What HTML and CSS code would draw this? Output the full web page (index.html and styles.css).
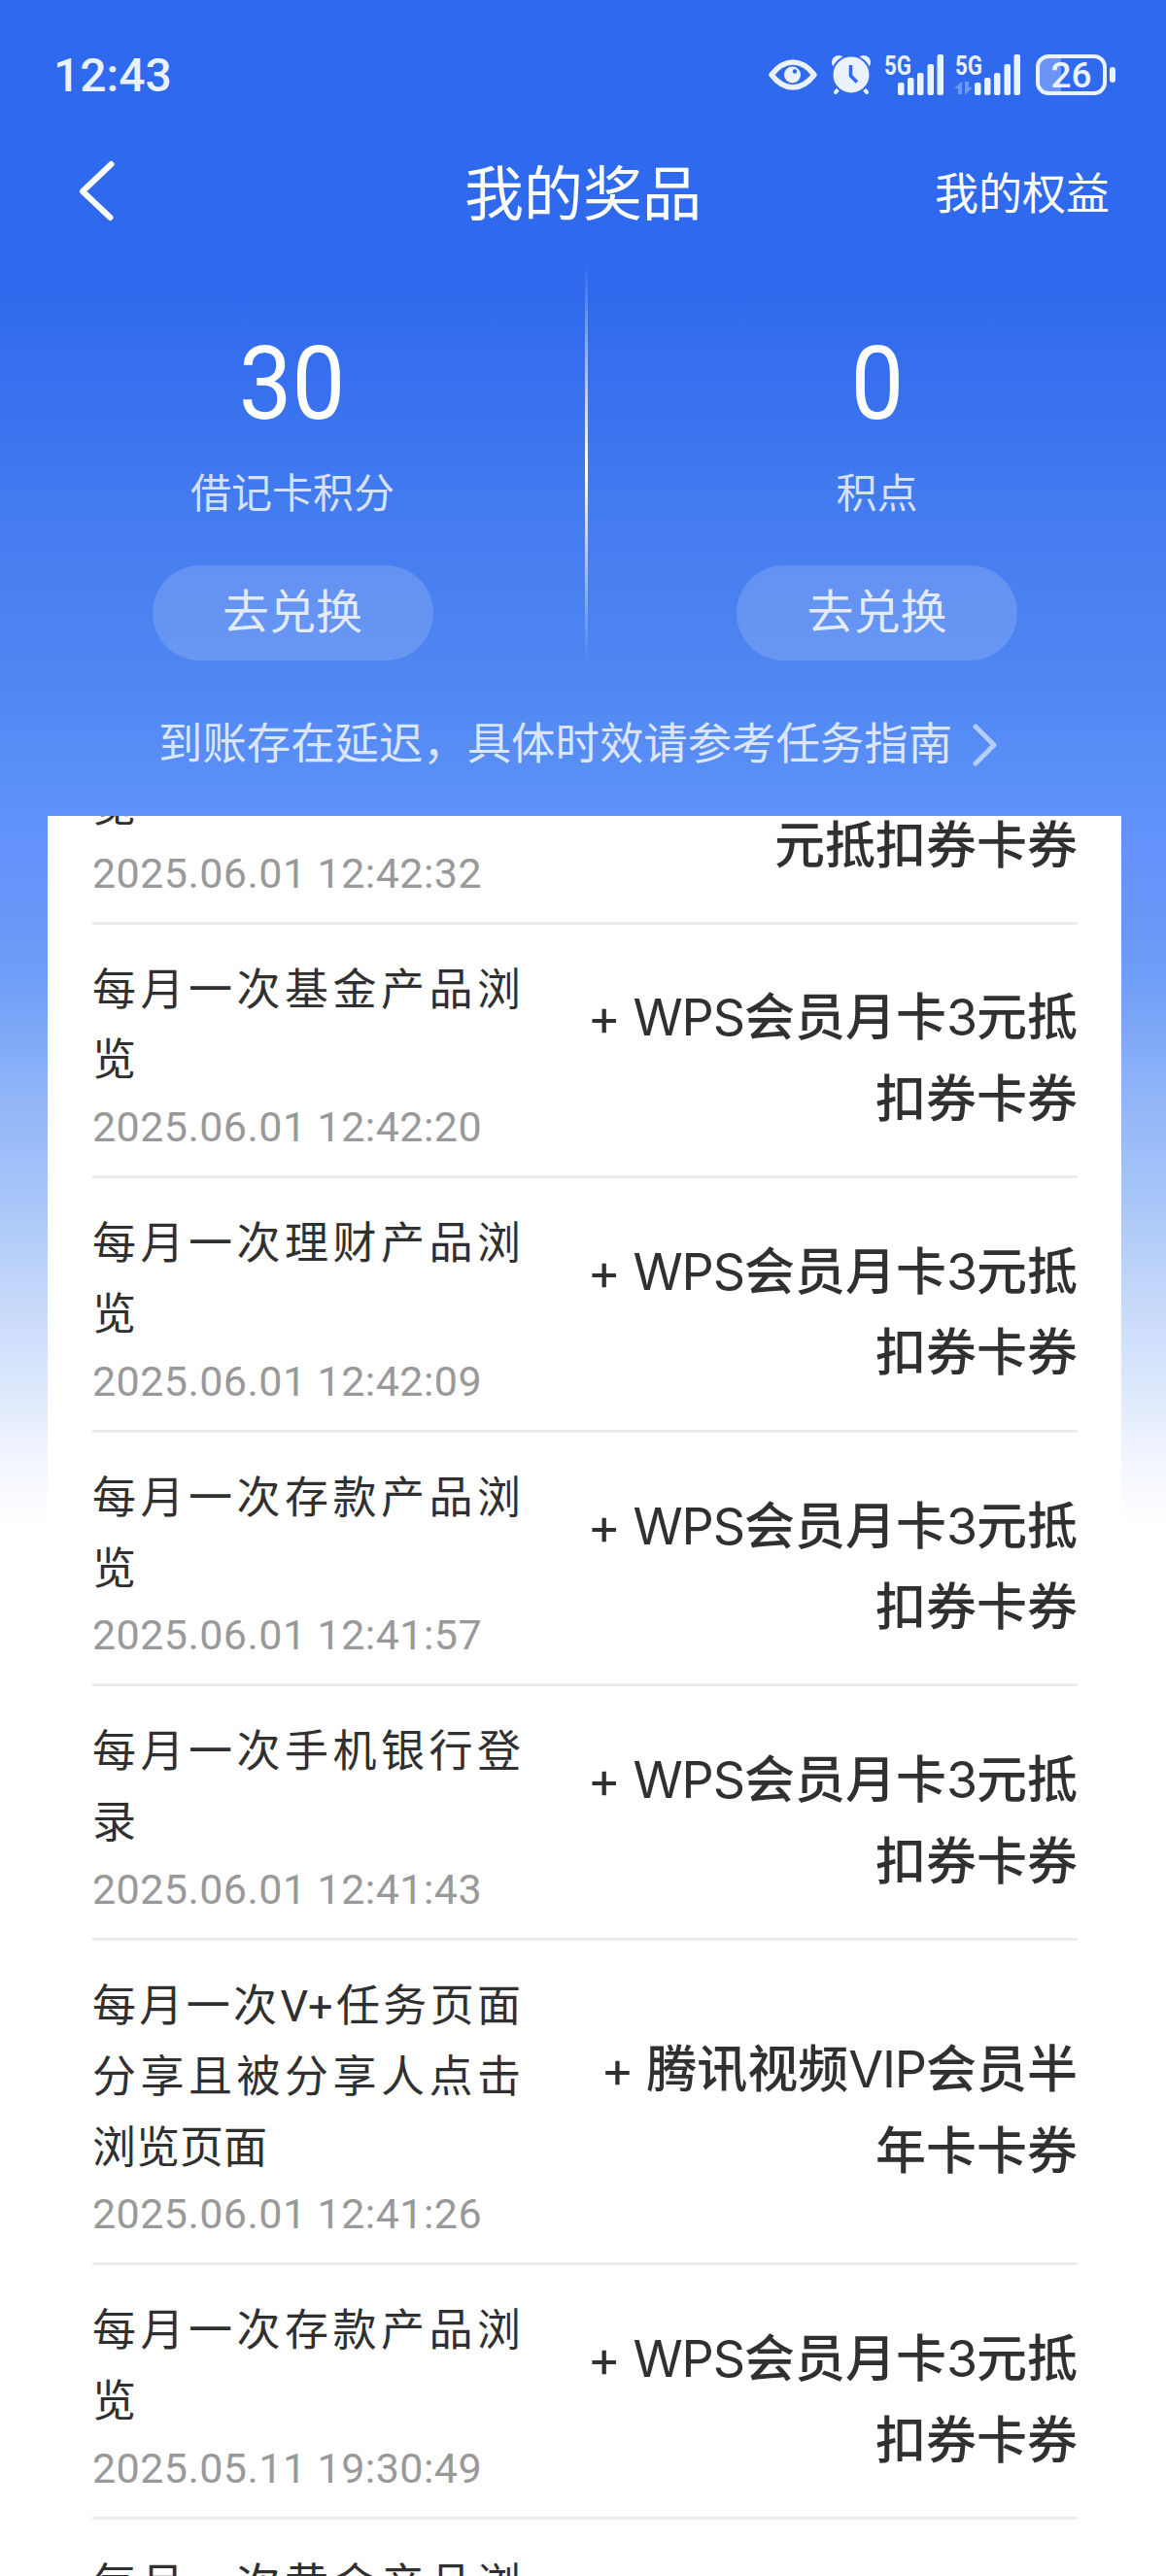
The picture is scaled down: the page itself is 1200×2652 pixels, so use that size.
FILE: index.html
```html
<!DOCTYPE html>
<html lang="zh-CN">
<head>
<meta charset="utf-8">
<title>我的奖品</title>
<link rel="stylesheet" href="styles.css">
</head>
<body>
<div class="screen">
  <header class="status">
    <span class="clock">12:43</span>
    <div class="status-icons">
      <svg class="eye" width="50" height="32" viewBox="0 0 50 32"><path d="M3 16Q13 3 25 3T47 16Q37 29 25 29T3 16Z" fill="none" stroke="#eaf1ff" stroke-width="5.500" stroke-linejoin="round"/><circle cx="24.500" cy="16" r="8.500" fill="#eaf1ff"/><circle cx="27" cy="12.500" r="2.200" fill="#2e69ee"/></svg>
      <svg class="alarm" width="42" height="42" viewBox="0 0 42 42"><g stroke="#eaf1ff" stroke-width="4" stroke-linecap="round"><path d="M9 34L5 39M33 34L37 39"/></g><circle cx="8" cy="8" r="7" fill="#eaf1ff"/><circle cx="34" cy="8" r="7" fill="#eaf1ff"/><circle cx="21" cy="21" r="19.500" fill="#eaf1ff" stroke="#2e69ee" stroke-width="2"/><path d="M20.500 11V22L27 28.500" fill="none" stroke="#2e69ee" stroke-width="3.500"/></svg>
      <svg class="signal" width="62" height="42" viewBox="0 0 62 42"><text x="0" y="20.500" class="net" textLength="28" lengthAdjust="spacingAndGlyphs">5G</text><g fill="#eaf1ff"><rect x="14" y="29" width="6.500" height="13" rx="2"/><rect x="24" y="24" width="6.500" height="18" rx="2"/><rect x="34" y="19" width="6.500" height="23" rx="2"/><rect x="44.500" y="10" width="6.500" height="32" rx="2"/><rect x="54.500" y="0" width="6.500" height="42" rx="2"/></g></svg>
      <svg class="signal-b" width="68" height="42" viewBox="0 0 68 42"><text x="1" y="20.500" class="net" textLength="28" lengthAdjust="spacingAndGlyphs">5G</text><path d="M0 35L8 28V41H4V35ZM11 28H15V34H19L11 42Z" fill="#6f98f6"/><g fill="#eaf1ff"><rect x="21" y="29" width="6.500" height="13" rx="2"/><rect x="31" y="24" width="6.500" height="18" rx="2"/><rect x="41" y="19" width="6.500" height="23" rx="2"/><rect x="51.500" y="10" width="6.500" height="32" rx="2"/><rect x="61.500" y="0" width="6.500" height="42" rx="2"/></g></svg>
      <svg class="battery" width="83" height="42" viewBox="0 0 83 42"><path d="M12 3H26V39H12Q3 37 3 29V12Q3 4 12 3Z" fill="#6c94f5"/><rect x="2" y="2" width="69" height="38" rx="11" fill="none" stroke="#eaf1ff" stroke-width="4"/><rect x="76" y="13" width="6" height="16" rx="3" fill="#eaf1ff"/><text x="36.500" y="34" class="level">26</text></svg>
    </div>
  </header>

  <nav class="nav">
    <svg class="back" width="40" height="64" viewBox="0 0 40 64"><path d="M34.500 4L5 32L33.500 59" fill="none" stroke="#fff" stroke-width="6" stroke-linecap="round" stroke-linejoin="round"/></svg>
    <h1 class="nav-title">我的奖品</h1>
    <span class="nav-link">我的权益</span>
  </nav>

  <section class="points">
    <div class="account">
      <strong class="amount">30</strong>
      <span class="label">借记卡积分</span>
      <span class="exchange">去兑换</span>
    </div>
    <div class="divider"></div>
    <div class="account">
      <strong class="amount">0</strong>
      <span class="label">积点</span>
      <span class="exchange">去兑换</span>
    </div>
  </section>

  <div class="notice">
    <span>到账存在延迟，具体时效请参考任务指南</span>
    <svg width="26" height="44" viewBox="0 0 26 44"><path d="M3 3L22 22L3 41" fill="none" stroke="#b5cdfb" stroke-width="5" stroke-linecap="round" stroke-linejoin="round"/></svg>
  </div>

  <main class="card">
    <div class="list">
      <article class="row row-cut">
        <div class="task"><p class="name">览</p><time class="date">2025.06.01 12:42:32</time></div>
        <p class="reward">元抵扣券卡券</p>
      </article>
      <article class="row">
        <div class="task"><p class="name">每月一次基金产品浏览</p><time class="date">2025.06.01 12:42:20</time></div>
        <p class="reward"><span class="en">+ WPS</span>会员月卡<span class="en">3</span>元抵<br>扣券卡券</p>
      </article>
      <article class="row">
        <div class="task"><p class="name">每月一次理财产品浏览</p><time class="date">2025.06.01 12:42:09</time></div>
        <p class="reward"><span class="en">+ WPS</span>会员月卡<span class="en">3</span>元抵<br>扣券卡券</p>
      </article>
      <article class="row">
        <div class="task"><p class="name">每月一次存款产品浏览</p><time class="date">2025.06.01 12:41:57</time></div>
        <p class="reward"><span class="en">+ WPS</span>会员月卡<span class="en">3</span>元抵<br>扣券卡券</p>
      </article>
      <article class="row">
        <div class="task"><p class="name">每月一次手机银行登录</p><time class="date">2025.06.01 12:41:43</time></div>
        <p class="reward"><span class="en">+ WPS</span>会员月卡<span class="en">3</span>元抵<br>扣券卡券</p>
      </article>
      <article class="row">
        <div class="task"><p class="name">每月一次V+任务页面分享且被分享人点击浏览页面</p><time class="date">2025.06.01 12:41:26</time></div>
        <p class="reward"><span class="en">+ </span>腾讯视频<span class="en">VIP</span>会员半<br>年卡卡券</p>
      </article>
      <article class="row">
        <div class="task"><p class="name">每月一次存款产品浏览</p><time class="date">2025.05.11 19:30:49</time></div>
        <p class="reward"><span class="en">+ WPS</span>会员月卡<span class="en">3</span>元抵<br>扣券卡券</p>
      </article>
      <article class="row row-last">
        <div class="task"><p class="name">每月一次黄金产品浏览</p></div>
      </article>
    </div>
  </main>
</div>
</body>
</html>
```
FILE: styles.css
```css
* { box-sizing: border-box; margin: 0; padding: 0; }
body { background: #fff; }
.screen {
  width: 1200px; height: 2652px; overflow: hidden;
  display: flex; flex-direction: column;
  font-family: Roboto, "Noto Sans CJK SC", sans-serif;
  background: linear-gradient(#2e69ee 0, #2e69ee 290px, #3a74ee 440px, #437bf0 520px, #4e85f1 680px, #5e92f8 840px, #6593fb 880px, #6b9af8 980px, #76a4f7 1040px, #8fb3f8 1120px, #a6c5f8 1230px, #c3d7fa 1330px, #dde8fc 1430px, #f1f5fe 1500px, #fff 1570px);
}
.status { height: 130px; padding: 23px 51px 0 55px; display: flex; justify-content: space-between; align-items: flex-start; }
.clock { font-size: 48px; font-weight: 500; line-height: 110px; color: #eaf1ff; }
.status-icons { display: flex; align-items: center; height: 42px; margin-top: 33px; }
.status-icons svg { overflow: visible; }
.alarm { margin-left: 14px; }
.signal { margin-left: 13px; }
.signal-b { margin-left: 10px; }
.battery { margin-left: 16px; }
.net { font-size: 28px; font-weight: 700; fill: #eaf1ff; }
.level { font-size: 37px; font-weight: 500; fill: #eaf1ff; text-anchor: middle; }

.nav { height: 140px; padding: 2px 58px 0 80px; display: grid; grid-template-columns: 220px 1fr 240px; align-items: center; color: #fff; }
.back { margin-bottom: 8px; }
.nav-title { font-size: 61px; font-weight: 400; line-height: 138px; text-align: center; margin-right: 2px; }
.nav-link { font-size: 45px; line-height: 138px; text-align: right; }

.points { height: 410px; display: grid; grid-template-columns: 602px 3px 595px; }
.account { display: flex; flex-direction: column; align-items: center; padding-top: 60px; }
.amount { font-size: 106px; font-weight: 400; line-height: 130px; color: #fff; transform: scaleX(.92); }
.label { font-size: 42px; line-height: 60px; margin-top: 19px; color: rgba(255,255,255,.8); }
.exchange { width: 289px; height: 98px; border-radius: 49px; margin-top: 43px; font-size: 48px; line-height: 97px; text-align: center; color: rgba(255,255,255,.82); background: rgba(255,255,255,.15); }
.divider { background: linear-gradient(rgba(255,255,255,0), #fff 52%, rgba(255,255,255,0)); }

.notice { height: 160px; padding: 13px 0 0 163px; display: flex; align-items: center; gap: 21px; font-size: 45.400px; white-space: nowrap; color: rgba(255,255,255,.78); }
.notice span { line-height: 66px; }

.card { width: 1105px; height: 1812px; margin-left: 49px; padding: 0 45px 0 46px; background: #fff; overflow: hidden; color: #303030; }
.list { margin-top: -150px; }
.row { min-height: 261.600px; padding: 32px 0 18px; border-bottom: 3px solid #ededed; display: flex; justify-content: space-between; align-items: center; }
.row-cut { align-items: flex-end; }
.row-cut .reward { margin-bottom: 17px; }
.row-last { align-items: flex-start; border-bottom: 0; }
.task { width: 441px; }
.name { font-size: 45px; line-height: 72.800px; text-align: justify; }
.date { display: block; font-size: 43px; line-height: 63px; letter-spacing: .45px; white-space: nowrap; color: #999; }
.reward { font-size: 52px; font-weight: 500; line-height: 83.400px; text-align: right; white-space: nowrap; }
.row:not(.row-cut) .reward { padding-top: 5px; }
.en { font-family: Inter, sans-serif; font-weight: 400; letter-spacing: -1.100px; }
```
